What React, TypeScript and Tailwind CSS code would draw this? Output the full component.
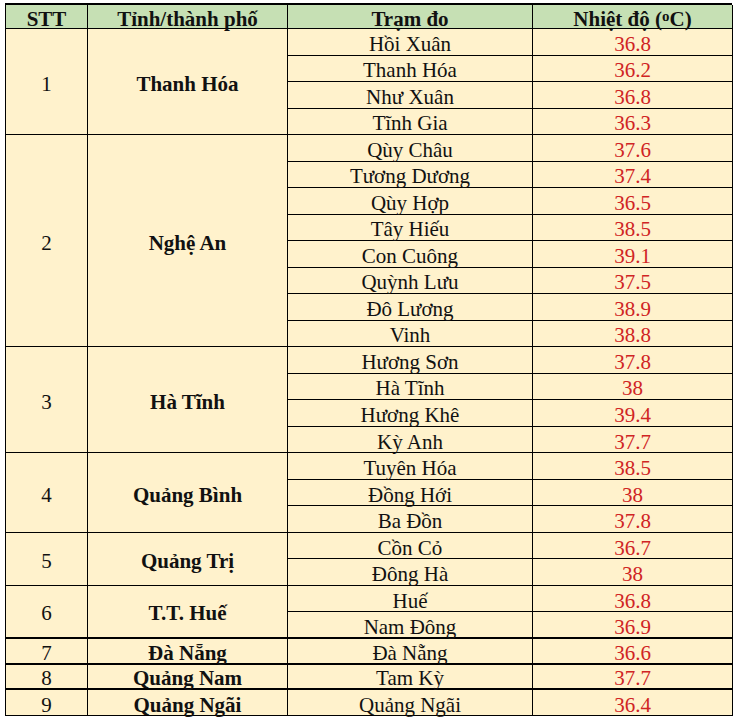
import React from "react";

type Group = { stt: number; province: string; stations: [string, string][] };

const groups: Group[] = [
  { stt: 1, province: "Thanh Hóa", stations: [["Hồi Xuân", "36.8"], ["Thanh Hóa", "36.2"], ["Như Xuân", "36.8"], ["Tĩnh Gia", "36.3"]] },
  {
    stt: 2,
    province: "Nghệ An",
    stations: [
      ["Qùy Châu", "37.6"],
      ["Tương Dương", "37.4"],
      ["Qùy Hợp", "36.5"],
      ["Tây Hiếu", "38.5"],
      ["Con Cuông", "39.1"],
      ["Quỳnh Lưu", "37.5"],
      ["Đô Lương", "38.9"],
      ["Vinh", "38.8"],
    ],
  },
  { stt: 3, province: "Hà Tĩnh", stations: [["Hương Sơn", "37.8"], ["Hà Tĩnh", "38"], ["Hương Khê", "39.4"], ["Kỳ Anh", "37.7"]] },
  { stt: 4, province: "Quảng Bình", stations: [["Tuyên Hóa", "38.5"], ["Đồng Hới", "38"], ["Ba Đồn", "37.8"]] },
  { stt: 5, province: "Quảng Trị", stations: [["Cồn Cỏ", "36.7"], ["Đông Hà", "38"]] },
  { stt: 6, province: "T.T. Huế", stations: [["Huế", "36.8"], ["Nam Đông", "36.9"]] },
  { stt: 7, province: "Đà Nẵng", stations: [["Đà Nẵng", "36.6"]] },
  { stt: 8, province: "Quảng Nam", stations: [["Tam Kỳ", "37.7"]] },
  { stt: 9, province: "Quảng Ngãi", stations: [["Quảng Ngãi", "36.4"]] },
];

const span: Record<number, string> = {
  1: "row-span-1",
  2: "row-span-2",
  3: "row-span-3",
  4: "row-span-4",
  8: "row-span-8",
};

// groups 6, 7 and 8 are closed by a heavier rule
const thick = new Set([6, 7, 8]);

const cell = "flex items-center justify-center border-r border-black leading-none pt-[5px]";

export default function App() {
  return (
    <div className="min-h-screen bg-white pl-[5px] pt-[3px] font-['Liberation_Serif','Times_New_Roman',serif] text-[21px] text-[#111]">
      <div className="grid w-[727px] grid-cols-[82px_200px_245px_200px] grid-rows-[24px_repeat(23,26.52px)_repeat(3,25.67px)] border-l border-t-2 border-black bg-[#fff2cc]">
        {["STT", "Tỉnh/thành phố", "Trạm đo", "Nhiệt độ (ºC)"].map((h) => (
          <div key={h} className={`${cell} border-b bg-[#c6e0b4] font-bold`}>
            {h === "Nhiệt độ (ºC)" ? (
              <span>
                Nhiệt độ (<span className="text-[15px] align-[5px]">o</span>C)
              </span>
            ) : (
              h
            )}
          </div>
        ))}
        {groups.map((g) => {
          const b = thick.has(g.stt) ? "border-b-2" : "border-b";
          return (
            <React.Fragment key={g.stt}>
              <div className={`${cell} ${b} ${span[g.stations.length]}`}>{g.stt}</div>
              <div className={`${cell} ${b} ${span[g.stations.length]} font-bold`}>{g.province}</div>
              {g.stations.map(([name, t], i) => {
                const last = i === g.stations.length - 1;
                const rb = last ? b : "border-b";
                return (
                  <React.Fragment key={name + i}>
                    <div className={`${cell} ${rb}`}>{name}</div>
                    <div className={`${cell} ${rb} text-[#d02424]`}>{t}</div>
                  </React.Fragment>
                );
              })}
            </React.Fragment>
          );
        })}
      </div>
    </div>
  );
}
